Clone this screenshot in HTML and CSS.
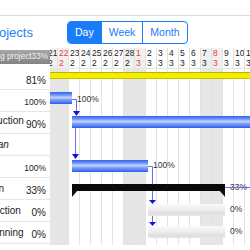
FILE: index.html
```html
<!DOCTYPE html>
<html lang="en">
<head>
    <meta charset="UTF-8">
    <title>Projects</title>
    <link rel="stylesheet" href="styles.css">
</head>
<body>
<div class="statusbar"></div>

<div class="page">
    <div class="toolbar">
        <div class="title-box"><span class="title">Projects</span></div>
        <div class="segments">
            <span class="seg active">Day</span>
            <span class="seg">Week</span>
            <span class="seg">Month</span>
        </div>
    </div>

    <div class="chart">
        <div class="tasks">
            <div class="tasks-head"><span class="head-label">Marketing project33%</span></div>
            <div class="task top"><span class="name">Website</span><span class="pct">81%</span></div>
            <div class="task top"><span class="name">Brief</span><span class="pct small">100%</span></div>
            <div class="task deep"><span class="name">Production</span><span class="pct">90%</span></div>
            <div class="task"><span class="name group">QA plan</span></div>
            <div class="task top"><span class="name">Copy</span><span class="pct small">100%</span></div>
            <div class="task"><span class="name">Design</span><span class="pct">33%</span></div>
            <div class="task"><span class="name">Production</span><span class="pct">0%</span></div>
            <div class="task"><span class="name">Replanning</span><span class="pct">0%</span></div>
        </div>

        <div class="timeline">
            <div class="timeline-inner">
                <div class="scale">
                    <span class="day we">21</span><span class="day we sun">22</span><span class="day">23</span><span class="day">24</span><span class="day">25</span><span class="day">26</span><span class="day">27</span><span class="day we">28</span><span class="day we sun">1</span><span class="day">2</span><span class="day">3</span><span class="day">4</span><span class="day">5</span><span class="day">6</span><span class="day we">7</span><span class="day we sun">8</span><span class="day">9</span><span class="day">10</span><span class="day">11</span>
                </div>
                <div class="scale">
                    <span class="day we">2</span><span class="day we sun">2</span><span class="day">2</span><span class="day">2</span><span class="day">2</span><span class="day">2</span><span class="day">2</span><span class="day we">2</span><span class="day we sun">3</span><span class="day">3</span><span class="day">3</span><span class="day">3</span><span class="day">3</span><span class="day">3</span><span class="day we">3</span><span class="day we sun">3</span><span class="day">3</span><span class="day">3</span><span class="day">3</span>
                </div>

                <div class="rows">
                    <div class="bar-row"><div class="bar summary-bar" style="margin-left:0;width:230px"></div></div>
                    <div class="bar-row"><div class="bar blue" style="margin-left:0;width:26px;margin-top:1px"></div><span class="bar-label">100%</span></div>
                    <div class="bar-row"><div class="bar blue" style="margin-left:26px;width:210px"></div></div>
                    <div class="bar-row"></div>
                    <div class="bar-row"><div class="bar blue" style="margin-left:26px;width:76px"></div><span class="bar-label">100%</span></div>
                    <div class="bar-row"><div class="bar project" style="margin-left:26px;width:153px"></div><span class="bar-label">33%</span></div>
                    <div class="bar-row"><div class="bar grey" style="margin-left:102px;width:77px"></div><span class="bar-label">0%</span></div>
                    <div class="bar-row"><div class="bar grey" style="margin-left:102px;width:77px"></div><span class="bar-label">0%</span></div>

                    <svg class="links" width="220" height="190" viewBox="0 0 220 190">
                        <g stroke="#6a6cf4" stroke-width="1" fill="none">
                            <path d="M26 30.5 H30.5 V42"/>
                            <path d="M29.5 59 V85"/>
                            <path d="M102 97.5 H106.5 V115"/>
                            <path d="M179 118.5 H220"/>
                            <path d="M106.5 122 V132"/>
                            <path d="M106.5 147 V154"/>
                        </g>
                        <g fill="#1414d8">
                            <path d="M27 42 H34 L30.5 47 Z"/>
                            <path d="M26 85 H33 L29.5 90 Z"/>
                            <path d="M103 131 H110 L106.5 135 Z"/>
                            <path d="M103 153 H110 L106.5 157 Z"/>
                        </g>
                        <g fill="#111">
                            <path d="M26 121 H32 L26 128 Z"/>
                            <path d="M173 121 H179 V128 Z"/>
                        </g>
                    </svg>
                </div>
            </div>
        </div>
    </div>
</div>
</body>
</html>
```

FILE: styles.css
```css
body {
    margin: 0;
    width: 250px;
    height: 250px;
    overflow: hidden;
    font-family: 'Liberation Sans', Arial, sans-serif;
    background-color: #ffffff;
    color: #222;
}

.statusbar {
    height: 15px;
    border-bottom: 1px solid #dcdcdc;
}

/* page is scrolled a bit to the right, so the left side is cut */
.page {
    margin-left: -60px;
    width: 310px;
}

.toolbar {
    display: flex;
    align-items: center;
    height: 32px;
}

.title-box {
    width: 110px;
    padding-left: 46px;
    box-sizing: border-box;
}

.title {
    font-size: 13px;
    color: #1a82fb;
    white-space: nowrap;
}

.segments {
    display: flex;
    margin-left: 17px;
    border: 1px solid #1a7cf9;
    border-radius: 4px;
    overflow: hidden;
}

.seg {
    padding: 0 7px;
    line-height: 21px;
    font-size: 10.5px;
    color: #1a7cf9;
    border-left: 1px solid #1a7cf9;
}

.seg:first-child {
    border-left: none;
}

.seg.active {
    background-color: #1a7cf9;
    color: #fff;
}

.chart {
    display: flex;
}

.tasks {
    width: 110px;
    flex-shrink: 0;
}

.tasks-head {
    height: 20px;
    padding-top: 2px;
    box-sizing: border-box;
}

.head-label {
    display: block;
    height: 14px;
    line-height: 14px;
    padding-right: 2px;
    text-align: right;
    font-size: 8.2px;
    color: #f4f4f4;
    white-space: nowrap;
    background: linear-gradient(#a6a6a6, #838383);
}

.task {
    display: flex;
    align-items: center;
    height: 21px;
    border-bottom: 1px solid #e6e6e6;
    font-size: 10px;
}

.name {
    flex: 1;
    padding-left: 33px;
    white-space: nowrap;
}

.task.top .name {
    padding-left: 4px;
}

.task.deep .name {
    padding-left: 36px;
    padding-bottom: 4px;
}

.name.group {
    font-style: italic;
}

.pct {
    padding-right: 4px;
    padding-top: 3px;
}

.pct.small {
    font-size: 8.5px;
}

.timeline {
    width: 200px;
    overflow: hidden;
}

.timeline-inner {
    margin-left: -4px;
    width: 220px;
}

.scale {
    display: flex;
    height: 10px;
}

.day {
    flex: 0 0 11px;
    box-sizing: border-box;
    border-left: 1px solid #e0e0e0;
    padding-left: 1px;
    font-size: 8.5px;
    line-height: 10px;
    color: #222;
    white-space: nowrap;
    overflow: hidden;
}

.day.we {
    background-color: #f0f0f0;
}

.day.sun {
    color: #f03a3a;
}

.rows {
    position: relative;
    background:
        repeating-linear-gradient(to right, #e2e2e2 0 1px, transparent 1px 11px),
        linear-gradient(to right, #e6e6e6 0 22px, transparent 22px 77px, #e6e6e6 77px 99px,
                        transparent 99px 154px, #e6e6e6 154px 176px, transparent 176px);
    border-top: 1px solid #e6e6e6;
}

.bar-row {
    display: flex;
    align-items: flex-start;
    height: 22px;
}

.bar {
    flex-shrink: 0;
    margin-top: 3px;
    height: 12px;
}

.summary-bar {
    height: 5px;
    background-color: #f3ee00;
    border-top: 1px solid #b9b400;
    border-bottom: 1px solid #c7c200;
}

.blue {
    background: linear-gradient(#2f62ee 0%, #6f93f6 25%, #c4d4ff 45%, #7d9ff8 65%, #2c5ef0 100%);
}

.project {
    margin-top: 5px;
    height: 7px;
    background-color: #0a0a0a;
}

.grey {
    background: linear-gradient(#fafafa 0%, #eeeeee 45%, #dedede 80%, #e8e8e8 100%);
}

.bar-label {
    margin-left: 5px;
    margin-top: 3px;
    font-size: 8.5px;
    line-height: 10px;
    color: #333;
}

.links {
    position: absolute;
    left: 0;
    top: 0;
}
```
